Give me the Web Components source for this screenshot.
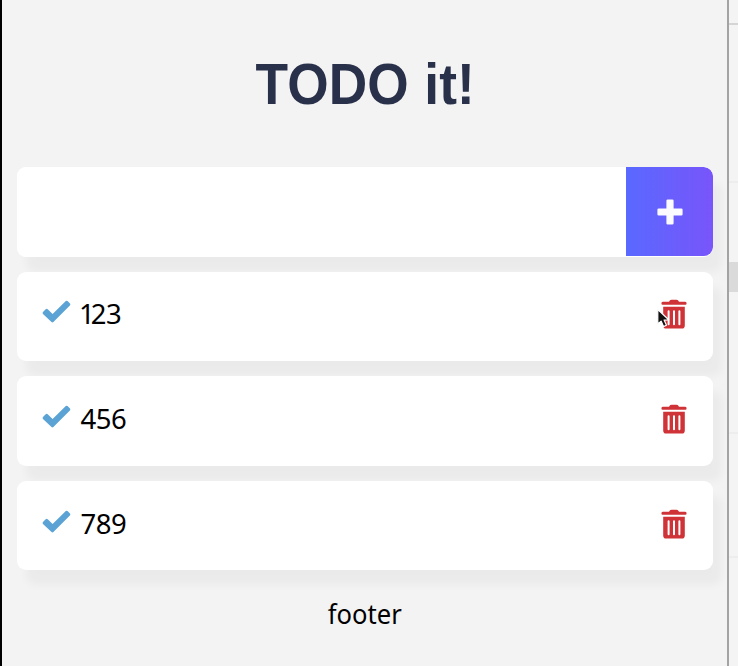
<!DOCTYPE html>
<html lang="en"><head><meta charset="utf-8"><title>TODO it!</title>
<style>
html,body{margin:0;height:100%;overflow:hidden;background:#f3f3f3}
body{font-family:"Noto Sans","Open Sans",sans-serif;color:#000}
.narrow{letter-spacing:-4px;margin-left:-1.5px}
</style></head><body>
<todo-app>
  <todo-header>TODO it!</todo-header>
  <todo-input></todo-input>
  <todo-list><todo-item><span class="narrow">1</span>23</todo-item><todo-item>456</todo-item><todo-item>789</todo-item></todo-list>
  <todo-footer>footer</todo-footer>
</todo-app>
<script>
const define=(name,html)=>customElements.define(name,class extends HTMLElement{
  constructor(){super();this.attachShadow({mode:'open'}).innerHTML=html;}
});
define('todo-app',`<style>
:host{display:grid;grid-template-columns:727px 11px;width:738px;height:666px;overflow:hidden;position:relative}
main{box-sizing:border-box;border-left:2px solid #000;padding:0 14px 0 14.5px;background:#f3f3f3;overflow:hidden}
svg.pointer{position:absolute;left:656px;top:308px}
</style><main><slot></slot></main><page-edge></page-edge>
<svg class="pointer" width="16" height="22" viewBox="0 0 16 22"><path d="M1.8 1.5V16l3.3-2.9 2.4 5.5 3-1.3-2.4-5.2 4.6-.3z" fill="#111" stroke="#fff" stroke-width="1.2" stroke-linejoin="round"/></svg>`);
define('page-edge',`<style>
:host{display:block;box-sizing:border-box;border-left:2px solid #a3a3a4;background:#f4f4f5}
div{display:grid;grid-template-rows:23px 2px 156px 2px 79px 30px 140px 2px 122px 2px 1fr}
i:nth-child(2){background:#d5d5d6}i:nth-child(4),i:nth-child(8),i:nth-child(10){background:#ededee}i:nth-child(6){background:#dadadb}
</style><div>${'<i></i>'.repeat(11)}</div>`);
define('todo-header',`<style>
:host{display:block;height:167px;text-align:center;color:#29304a}
h1{margin:0;font:bold 57px/168px "Liberation Sans",sans-serif}
span{display:inline-block;transform:scaleX(.935);word-spacing:1px}
</style><h1><span><slot></slot></span></h1>`);
define('todo-input',`<style>
:host{display:flex;height:89.6px;border-radius:9px;background:#fff;box-shadow:9px 15px 9px rgba(0,0,0,.034);overflow:hidden}
:host{margin-bottom:15px}
input{flex:1;min-width:0;border:0;background:#fff;outline:0;font:28px "Noto Sans"}
button{width:87px;height:89px;border:0;border-radius:0 9px 9px 0;padding:0;display:grid;place-items:center;background:linear-gradient(to right,#5969ff,#7855fb)}
</style><input aria-label="New todo"><button aria-label="Add"><svg width="26" height="26" viewBox="0 0 26 26"><path d="M10.7 1.7h4.6v9h9v4.6h-9v9h-4.6v-9h-9v-4.6h9z" fill="#fafaff" stroke="#fafaff" stroke-width="2.6" stroke-linejoin="round"/></svg></button>`);
define('todo-list',`<style>:host{display:grid;grid-auto-rows:89.6px;row-gap:15px}</style><slot></slot>`);
define('todo-item',`<style>
:host{display:flex;box-sizing:border-box;align-items:center;padding:0 25px 5px 24px;border-radius:9px;background:#fff;box-shadow:9px 15px 9px rgba(0,0,0,.034);font-size:27.5px;letter-spacing:-.5px}
.check{margin:-3px 10px 0 0}.text{flex:1}
.trash{margin-top:1px}
</style><svg class="check" width="30" height="24" viewBox="0 0 30 24"><path d="M2 12L4.7 9.3Q5.7 8.4 6.7 9.3L11.6 13.9 24.8 1.1Q25.8.3 26.8 1.2L29 3.4Q29.8 4.4 28.9 5.4L12.4 22Q11.4 22.8 10.5 22L2 14Q1.1 13 2 12z" fill="#5ba3d5"/></svg>
<span class="text"><slot></slot></span>
<svg class="trash" width="28" height="30" viewBox="0 0 28 30"><path fill="#cf3237" d="M1.5 5V4Q1.5 2.7 3 2.7H9L10 1.3Q10.4.8 11.5.8H16.5Q17.6.8 18 1.3L19 2.7H25Q26.5 2.7 26.5 4V5Q26.5 5.8 25.5 5.8H2.5Q1.5 5.8 1.5 5zM3.2 7.8H24.8V26.5Q24.8 29.6 22 29.6H6Q3.2 29.6 3.2 26.5z"/><path d="M8.6 12.2V25.2M14 12.2V25.2M19.4 12.2V25.2" stroke="#fff" stroke-width="2" stroke-linecap="round"/></svg>`);
define('todo-footer',`<style>:host{display:block;text-align:center;font-size:27.5px;line-height:38px;margin-top:24.5px}span{display:inline-block;transform:scaleX(.93)}</style><span><slot></slot></span>`);
</script></body></html>
